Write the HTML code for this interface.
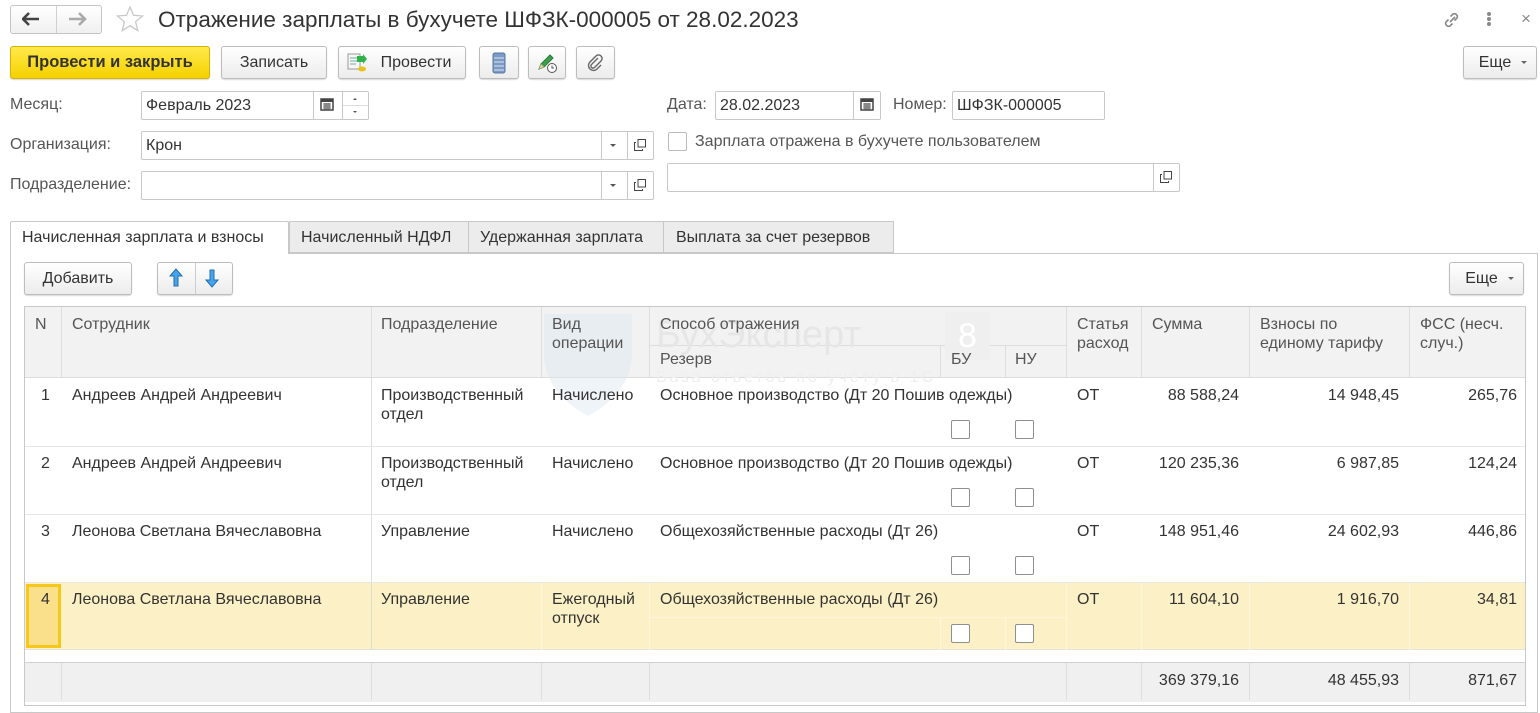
<!DOCTYPE html>
<html><head><meta charset="utf-8"><style>
*{box-sizing:border-box;margin:0;padding:0}
body{width:1540px;height:700px;overflow:hidden;background:#fff;font-family:"Liberation Sans",Arial,sans-serif;font-size:16px;color:#333;position:relative}
.a{position:absolute}
.t{position:absolute;white-space:nowrap;line-height:19px}
.btn{position:absolute;height:33px;border:1px solid #bdbdbd;border-radius:3px;background:linear-gradient(#fff,#ececec);box-shadow:0 1px 1px rgba(0,0,0,.15);text-align:center;line-height:31px;color:#333}
.inp{position:absolute;height:29px;border:1px solid #c8c8c8;border-radius:2px;background:#fff;line-height:27px;padding-left:4px;color:#333}
.vl{position:absolute;width:1px;background:#ddd}
.hl{position:absolute;height:1px;background:#ddd}
.cb{position:absolute;width:19px;height:19px;border:1px solid #8f8f8f;border-radius:2px;background:#fff}
.r{text-align:right}
</style></head><body>

<!-- nav -->
<div class="a" style="left:10px;top:5px;width:92px;height:29px;border:1px solid #c4c4c4;border-radius:3px;background:linear-gradient(#fff,#f0f0f0)"></div>
<div class="a" style="left:56px;top:6px;width:1px;height:27px;background:#d0d0d0"></div>
<svg class="a" style="left:22px;top:12px" width="20" height="14"><path d="M1 7h16M7 1L1 7l6 6" stroke="#444" stroke-width="2.6" fill="none"/></svg>
<svg class="a" style="left:68px;top:12px" width="20" height="14"><path d="M1 7h16M11 1l6 6-6 6" stroke="#aaa" stroke-width="2.6" fill="none"/></svg>
<svg class="a" style="left:116px;top:5px" width="28" height="28"><path d="M14 2l3.5 8.3 9 .7-6.9 5.8 2.2 8.8L14 20.8 6.2 25.6l2.2-8.8L1.5 11l9-.7z" fill="none" stroke="#c8c8c8" stroke-width="1.3"/></svg>
<div class="t" style="left:158px;top:6px;font-size:22.5px;line-height:28px;color:#333">Отражение зарплаты в бухучете ШФЗК-000005 от 28.02.2023</div>
<svg class="a" style="left:1441px;top:9px" width="22" height="22"><path d="M9 13l5-5M7.5 10.5l-2.5 2.5a3 3 0 004 4l2.5-2.5M13.5 11.5l2.5-2.5a3 3 0 00-4-4L9.5 7.5" stroke="#888" stroke-width="1.6" fill="none"/></svg>
<div class="a" style="left:1487px;top:12px;width:4px;height:4px;border-radius:2px;background:#888;box-shadow:0 5px 0 #888,0 10px 0 #888"></div>
<div class="t" style="left:1521px;top:9px;font-size:17px;color:#888">×</div>

<!-- toolbar -->
<div class="btn" style="left:10px;top:46px;width:200px;background:linear-gradient(#ffe94a,#f5d100);border-color:#d4b400;font-weight:bold;color:#333;font-size:16.5px">Провести и закрыть</div>
<div class="btn" style="left:221px;top:46px;width:106px">Записать</div>
<div class="btn" style="left:338px;top:46px;width:128px;padding-left:28px">Провести</div>
<svg class="a" style="left:347px;top:53px" width="22" height="20"><rect x="1" y="1" width="12" height="15" fill="#f6f6f6" stroke="#999"/><path d="M3 5h8M3 8h8M3 11h6" stroke="#7aa"/><path d="M10 3h6v-2l4 5-4 5v-2h-6z" fill="#2fb34a"/><ellipse cx="15" cy="16" rx="4" ry="2.5" fill="#e8c21a"/></svg>
<div class="btn" style="left:479px;top:46px;width:40px"></div>
<svg class="a" style="left:491px;top:52px" width="16" height="22"><rect x="2" y="1" width="12" height="20" rx="2" fill="#7b9ac4" stroke="#5577a8"/><path d="M3 6h10M3 10h10M3 14h10M3 18h10" stroke="#dce6f3"/></svg>
<div class="btn" style="left:528px;top:46px;width:38px"></div>
<svg class="a" style="left:536px;top:52px" width="22" height="22"><path d="M3 17l2-5 9-9 3 3-9 9z" fill="#3aa04a" stroke="#2a7a35"/><path d="M3 17l2-5 3 3z" fill="#e7c896"/><circle cx="16" cy="16" r="4.5" fill="#fff" stroke="#555"/><path d="M16 13.5v2.5h2" stroke="#555" fill="none"/></svg>
<div class="btn" style="left:576px;top:46px;width:39px"></div>
<svg class="a" style="left:586px;top:53px" width="18" height="20"><path d="M12 5l-6.5 6.5a2 2 0 003 3L15 8a3.5 3.5 0 00-5-5L3.5 9.5a5 5 0 007 7L15 12" stroke="#666" stroke-width="1.4" fill="none"/></svg>
<div class="btn" style="left:1463px;top:46px;width:74px;padding-right:10px">Еще</div>
<div class="a" style="left:1521px;top:61px;border:3px solid transparent;border-top:3px solid #666;border-bottom:0"></div>

<!-- form fields -->
<div class="t" style="left:10px;top:95px;color:#555">Месяц:</div>
<div class="inp" style="left:141px;top:91px;width:228px">Февраль 2023</div>
<div class="vl" style="left:313px;top:92px;height:27px;background:#c8c8c8"></div>
<div class="vl" style="left:342px;top:92px;height:27px;background:#c8c8c8"></div>
<div class="hl" style="left:343px;top:105px;width:25px;background:#ddd"></div>
<svg class="a" style="left:320px;top:97px" width="15" height="15"><rect x="1" y="2" width="12" height="11" fill="#fff" stroke="#444" stroke-width="1.5"/><rect x="1" y="2" width="12" height="3" fill="#444"/><path d="M3 7h8M3 9h8M3 11h8M5 6v7M7 6v7M9 6v7" stroke="#444" stroke-width=".8"/></svg>
<div class="a" style="left:353px;top:98px;border:2px solid transparent;border-bottom:2px solid #555;border-top:0"></div>
<div class="a" style="left:353px;top:111px;border:2px solid transparent;border-top:2px solid #555;border-bottom:0"></div>

<div class="t" style="left:10px;top:135px;color:#555">Организация:</div>
<div class="inp" style="left:141px;top:131px;width:513px">Крон</div>
<div class="vl" style="left:601px;top:132px;height:27px;background:#c8c8c8"></div>
<div class="vl" style="left:627px;top:132px;height:27px;background:#c8c8c8"></div>
<div class="a" style="left:610px;top:144px;border:3px solid transparent;border-top:3px solid #555;border-bottom:0"></div>
<div class="t" style="left:10px;top:175px;color:#555">Подразделение:</div>
<div class="inp" style="left:141px;top:171px;width:513px"></div>
<div class="vl" style="left:601px;top:172px;height:27px;background:#c8c8c8"></div>
<div class="vl" style="left:627px;top:172px;height:27px;background:#c8c8c8"></div>
<div class="a" style="left:610px;top:184px;border:3px solid transparent;border-top:3px solid #555;border-bottom:0"></div>

<div class="t" style="left:667px;top:95px;color:#555">Дата:</div>
<div class="inp" style="left:715px;top:91px;width:166px">28.02.2023</div>
<div class="vl" style="left:853px;top:92px;height:27px;background:#c8c8c8"></div>
<svg class="a" style="left:860px;top:97px" width="15" height="15"><rect x="1" y="2" width="12" height="11" fill="#fff" stroke="#444" stroke-width="1.5"/><rect x="1" y="2" width="12" height="3" fill="#444"/><path d="M3 7h8M3 9h8M3 11h8M5 6v7M7 6v7M9 6v7" stroke="#444" stroke-width=".8"/></svg>
<div class="t" style="left:893px;top:95px;color:#555">Номер:</div>
<div class="inp" style="left:952px;top:91px;width:153px">ШФЗК-000005</div>
<div class="cb" style="left:668px;top:132px;border-color:#bbb"></div>
<div class="t" style="left:695px;top:132px;color:#555">Зарплата отражена в бухучете пользователем</div>
<div class="inp" style="left:667px;top:163px;width:513px"></div>
<div class="vl" style="left:1153px;top:164px;height:27px;background:#c8c8c8"></div>

<svg class="a" style="left:633px;top:138px" width="14" height="14"><rect x="5" y="1.5" width="7.5" height="7.5" fill="none" stroke="#444"/><path d="M3 4.5H1.5v8h8V11" fill="none" stroke="#444"/></svg>
<svg class="a" style="left:633px;top:178px" width="14" height="14"><rect x="5" y="1.5" width="7.5" height="7.5" fill="none" stroke="#444"/><path d="M3 4.5H1.5v8h8V11" fill="none" stroke="#444"/></svg>
<svg class="a" style="left:1159px;top:170px" width="14" height="14"><rect x="5" y="1.5" width="7.5" height="7.5" fill="none" stroke="#444"/><path d="M3 4.5H1.5v8h8V11" fill="none" stroke="#444"/></svg>

<!-- tabs -->
<div class="a" style="left:10px;top:253px;width:1528px;height:460px;border:1px solid #c8c8c8"></div>
<div class="a" style="left:10px;top:221px;width:279px;height:33px;border:1px solid #c8c8c8;border-bottom:none;background:#fff;border-radius:2px 2px 0 0"></div>
<div class="t" style="left:22px;top:228px">Начисленная зарплата и взносы</div>
<div class="a" style="left:289px;top:221px;width:180px;height:32px;border:1px solid #c8c8c8;background:#ececec"></div>
<div class="t" style="left:301px;top:228px">Начисленный НДФЛ</div>
<div class="a" style="left:468px;top:221px;width:196px;height:32px;border:1px solid #c8c8c8;background:#ececec"></div>
<div class="t" style="left:480px;top:228px">Удержанная зарплата</div>
<div class="a" style="left:663px;top:221px;width:231px;height:32px;border:1px solid #c8c8c8;background:#ececec"></div>
<div class="t" style="left:676px;top:228px">Выплата за счет резервов</div>

<div class="btn" style="left:24px;top:262px;width:108px">Добавить</div>
<div class="btn" style="left:157px;top:262px;width:76px"></div>
<div class="vl" style="left:195px;top:263px;height:31px;background:#ccc"></div>
<svg class="a" style="left:168px;top:268px" width="16" height="20"><path d="M8 1L2 8h4v10h4V8h4z" fill="#4aa3e8" stroke="#1e6fb3"/></svg>
<svg class="a" style="left:204px;top:268px" width="16" height="20"><path d="M8 19L2 12h4V2h4v10h4z" fill="#4aa3e8" stroke="#1e6fb3"/></svg>
<div class="btn" style="left:1449px;top:262px;width:75px;padding-right:10px">Еще</div>
<div class="a" style="left:1508px;top:277px;border:3px solid transparent;border-top:3px solid #666;border-bottom:0"></div>

<!-- table -->
<div class="a" style="left:24px;top:306px;width:1502px;height:400px;border:1px solid #c8c8c8;background:#fff"></div>
<div class="a" style="left:25px;top:307px;width:1500px;height:71px;background:#f2f2f2;border-bottom:1px solid #ddd"></div>
<div class="vl" style="left:61px;top:307px;height:71px"></div>
<div class="vl" style="left:371px;top:307px;height:71px"></div>
<div class="vl" style="left:541px;top:307px;height:71px"></div>
<div class="vl" style="left:649px;top:307px;height:71px"></div>
<div class="hl" style="left:649px;top:345px;width:417px"></div>
<div class="vl" style="left:940px;top:345px;height:33px"></div>
<div class="vl" style="left:1005px;top:345px;height:33px"></div>
<div class="vl" style="left:1066px;top:307px;height:71px"></div>
<div class="vl" style="left:1141px;top:307px;height:71px"></div>
<div class="vl" style="left:1249px;top:307px;height:71px"></div>
<div class="vl" style="left:1409px;top:307px;height:71px"></div>

<!-- watermark -->
<svg class="a" style="left:540px;top:308px" width="96" height="112"><path d="M4 6h88v40c0 30-22 50-44 62C26 96 4 76 4 46z" fill="#dbe7f2" opacity=".45"/></svg>
<div class="t" style="left:656px;top:314px;font-size:38px;line-height:42px;color:#e6e6e6">БухЭксперт</div>
<div class="a" style="left:945px;top:312px;width:45px;height:48px;background:#efefef;color:#fff;font-size:34px;text-align:center;line-height:48px">8</div>
<div class="t" style="left:656px;top:368px;font-size:16px;letter-spacing:3px;color:#eeeeee">База ответов по учёту в 1С</div>

<div class="t" style="left:35px;top:315px;color:#555">N</div>
<div class="t" style="left:72px;top:315px;color:#555">Сотрудник</div>
<div class="t" style="left:381px;top:315px;color:#555">Подразделение</div>
<div class="t" style="left:552px;top:315px;color:#555">Вид<br>операции</div>
<div class="t" style="left:660px;top:315px;color:#555">Способ отражения</div>
<div class="t" style="left:660px;top:350px;color:#555">Резерв</div>
<div class="t" style="left:951px;top:350px;color:#555">БУ</div>
<div class="t" style="left:1015px;top:350px;color:#555">НУ</div>
<div class="t" style="left:1077px;top:315px;color:#555">Статья<br>расход</div>
<div class="t" style="left:1152px;top:315px;color:#555">Сумма</div>
<div class="t" style="left:1260px;top:315px;color:#555">Взносы по<br>единому тарифу</div>
<div class="t" style="left:1420px;top:315px;color:#555">ФСС (несч.<br>случ.)</div>

<div class="vl" style="left:371px;top:378px;height:204px"></div>
<div class="hl" style="left:25px;top:446px;width:1500px;background:#e6e6e6"></div>
<div class="hl" style="left:25px;top:514px;width:1500px;background:#e6e6e6"></div>
<div class="hl" style="left:25px;top:582px;width:1500px;background:#e6e6e6"></div>

<!-- row 4 highlight -->
<div class="a" style="left:25px;top:583px;width:1500px;height:67px;background:#fcf1c6;border-bottom:1px solid #e2e2e2"></div>
<div class="a" style="left:26px;top:584px;width:35px;height:64px;background:#fbe08c;border:3px solid #f7c81c"></div>
<div class="vl" style="left:371px;top:583px;height:67px;background:#e0dccb"></div>
<div class="vl" style="left:541px;top:583px;height:67px;background:#fff6dd"></div>
<div class="vl" style="left:649px;top:583px;height:67px;background:#fff6dd"></div>
<div class="hl" style="left:649px;top:617px;width:417px;background:#fff6dd"></div>
<div class="vl" style="left:940px;top:617px;height:33px;background:#fff6dd"></div>
<div class="vl" style="left:1005px;top:617px;height:33px;background:#fff6dd"></div>
<div class="vl" style="left:1066px;top:583px;height:67px;background:#fff6dd"></div>
<div class="vl" style="left:1141px;top:583px;height:67px;background:#fff6dd"></div>
<div class="vl" style="left:1249px;top:583px;height:67px;background:#fff6dd"></div>
<div class="vl" style="left:1409px;top:583px;height:67px;background:#fff6dd"></div>

<!-- row data -->
<div class="t" style="left:41px;top:386px">1</div>
<div class="t" style="left:72px;top:386px">Андреев Андрей Андреевич</div>
<div class="t" style="left:381px;top:386px">Производственный<br>отдел</div>
<div class="t" style="left:552px;top:386px">Начислено</div>
<div class="t" style="left:660px;top:386px">Основное производство (Дт 20 Пошив одежды)</div>
<div class="t" style="left:1077px;top:386px">ОТ</div>
<div class="t r" style="left:1141px;width:98px;top:386px">88 588,24</div>
<div class="t r" style="left:1249px;width:150px;top:386px">14 948,45</div>
<div class="t r" style="left:1409px;width:108px;top:386px">265,76</div>
<div class="cb" style="left:951px;top:420px"></div><div class="cb" style="left:1015px;top:420px"></div>

<div class="t" style="left:41px;top:454px">2</div>
<div class="t" style="left:72px;top:454px">Андреев Андрей Андреевич</div>
<div class="t" style="left:381px;top:454px">Производственный<br>отдел</div>
<div class="t" style="left:552px;top:454px">Начислено</div>
<div class="t" style="left:660px;top:454px">Основное производство (Дт 20 Пошив одежды)</div>
<div class="t" style="left:1077px;top:454px">ОТ</div>
<div class="t r" style="left:1141px;width:98px;top:454px">120 235,36</div>
<div class="t r" style="left:1249px;width:150px;top:454px">6 987,85</div>
<div class="t r" style="left:1409px;width:108px;top:454px">124,24</div>
<div class="cb" style="left:951px;top:488px"></div><div class="cb" style="left:1015px;top:488px"></div>

<div class="t" style="left:41px;top:522px">3</div>
<div class="t" style="left:72px;top:522px">Леонова Светлана Вячеславовна</div>
<div class="t" style="left:381px;top:522px">Управление</div>
<div class="t" style="left:552px;top:522px">Начислено</div>
<div class="t" style="left:660px;top:522px">Общехозяйственные расходы (Дт 26)</div>
<div class="t" style="left:1077px;top:522px">ОТ</div>
<div class="t r" style="left:1141px;width:98px;top:522px">148 951,46</div>
<div class="t r" style="left:1249px;width:150px;top:522px">24 602,93</div>
<div class="t r" style="left:1409px;width:108px;top:522px">446,86</div>
<div class="cb" style="left:951px;top:556px"></div><div class="cb" style="left:1015px;top:556px"></div>

<div class="t" style="left:41px;top:590px">4</div>
<div class="t" style="left:72px;top:590px">Леонова Светлана Вячеславовна</div>
<div class="t" style="left:381px;top:590px">Управление</div>
<div class="t" style="left:552px;top:590px">Ежегодный<br>отпуск</div>
<div class="t" style="left:660px;top:590px">Общехозяйственные расходы (Дт 26)</div>
<div class="t" style="left:1077px;top:590px">ОТ</div>
<div class="t r" style="left:1141px;width:98px;top:590px">11 604,10</div>
<div class="t r" style="left:1249px;width:150px;top:590px">1 916,70</div>
<div class="t r" style="left:1409px;width:108px;top:590px">34,81</div>
<div class="cb" style="left:951px;top:624px"></div><div class="cb" style="left:1015px;top:624px"></div>

<!-- footer -->
<div class="a" style="left:25px;top:662px;width:1500px;height:40px;background:#f0f0f0;border-top:1px solid #d0d0d0"></div>
<div class="vl" style="left:61px;top:663px;height:37px"></div>
<div class="vl" style="left:371px;top:663px;height:37px"></div>
<div class="vl" style="left:541px;top:663px;height:37px"></div>
<div class="vl" style="left:649px;top:663px;height:37px"></div>
<div class="vl" style="left:1066px;top:663px;height:37px"></div>
<div class="vl" style="left:1141px;top:663px;height:37px"></div>
<div class="vl" style="left:1249px;top:663px;height:37px"></div>
<div class="vl" style="left:1409px;top:663px;height:37px"></div>
<div class="t r" style="left:1141px;width:98px;top:671px">369 379,16</div>
<div class="t r" style="left:1249px;width:150px;top:671px">48 455,93</div>
<div class="t r" style="left:1409px;width:108px;top:671px">871,67</div>
</body></html>
